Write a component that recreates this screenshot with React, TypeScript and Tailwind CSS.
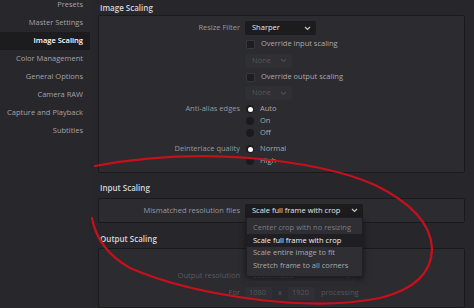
import React from "react";

const nav = [
  "Presets",
  "Master Settings",
  "Image Scaling",
  "Color Management",
  "General Options",
  "Camera RAW",
  "Capture and Playback",
  "Subtitles",
];

const scaleOptions = [
  { label: "Center crop with no resizing", tone: "text-[#7c7c82]" },
  { label: "Scale full frame with crop", tone: "text-[#f2f2f2] bg-[#1f1f23]" },
  { label: "Scale entire image to fit", tone: "text-[#a9a9ae]" },
  { label: "Stretch frame to all corners", tone: "text-[#a9a9ae]" },
];

const Chevron = ({ dim }: { dim?: boolean }) => (
  <svg
    width="7"
    height="5"
    viewBox="0 0 7 5"
    className={dim ? "text-[#4c4c52]" : "text-[#c4c4c8]"}
  >
    <path d="M1 1l2.5 2.5L6 1" fill="none" stroke="currentColor" strokeWidth="1.2" />
  </svg>
);

const Select = ({
  value,
  width,
  dim,
  children,
}: {
  value: string;
  width: string;
  dim?: boolean;
  children?: React.ReactNode;
}) => (
  <div
    className={`relative h-[14px] ${width} rounded-[2px] flex items-center justify-between pl-[7px] pr-[5px] ${
      dim ? "bg-[#2f2f34] text-[#56565c]" : "bg-[#1c1c1f] text-[#e6e6e8]"
    }`}
  >
    <span>{value}</span>
    <Chevron dim={dim} />
    {children}
  </div>
);

const Check = ({ label }: { label: string }) => (
  <div className="flex items-center gap-[6px] text-[#a9a9ae]">
    <span className="w-[9px] h-[9px] ml-[1px] rounded-[1px] bg-[#1e1e21] border border-[#37373c]" />
    <span>{label}</span>
  </div>
);

const Radio = ({ label, on }: { label: string; on?: boolean }) => (
  <div className="h-[12px] flex items-center gap-[6px] text-[#a9a9ae]">
    <span className="w-[8px] h-[8px] ml-[1px] rounded-full bg-[#1b1b1e] flex items-center justify-center">
      {on && <span className="w-[5px] h-[5px] rounded-full bg-white" />}
    </span>
    <span>{label}</span>
  </div>
);

const Row = ({
  label,
  h,
  dim,
  children,
}: {
  label?: string;
  h: string;
  dim?: boolean;
  children: React.ReactNode;
}) => (
  <div className={`flex items-center ${h}`}>
    <div
      className={`w-[141px] shrink-0 text-right ${dim ? "text-[#5a5a60]" : "text-[#98989e]"}`}
    >
      {label}
    </div>
    <div className="ml-[5px] flex items-center">{children}</div>
  </div>
);

const RadioGroup = ({ label, items }: { label: string; items: [string, boolean][] }) => (
  <div className="flex items-start">
    <div className="w-[141px] shrink-0 h-[12px] flex items-center justify-end text-[#98989e]">
      {label}
    </div>
    <div className="ml-[5px] flex flex-col">
      {items.map(([l, on]) => (
        <Radio key={l} label={l} on={on} />
      ))}
    </div>
  </div>
);

const Heading = ({ children, className }: { children: string; className: string }) => (
  <h2 className={`flex items-center pl-[2px] text-[8px] font-semibold text-[#d6d6da] ${className}`}>
    {children}
  </h2>
);

export default function App() {
  return (
    <div className="relative w-[474px] h-[308px] overflow-hidden flex bg-[#28282c] font-['Open_Sans',sans-serif] text-[7.5px] leading-none">
      <aside className="w-[90px] shrink-0 -mt-[4px] flex flex-col bg-[#28282c]">
        {nav.map((n) => (
          <div
            key={n}
            className={`h-[18px] shrink-0 flex items-center justify-end pr-[7px] ${
              n === "Image Scaling"
                ? "bg-[#1c1c1f] text-white font-semibold"
                : "text-[#a2a2a8]"
            }`}
          >
            {n}
          </div>
        ))}
      </aside>

      <main className="flex-1 pl-[8px] pr-[9px] flex flex-col bg-[#27272b]">
        <Heading className="h-[15px] pt-[1px]">Image Scaling</Heading>
        <section className="h-[158px] shrink-0 border border-[#1a1a1d] bg-[#2b2b30] rounded-[2px] pt-[4px] flex flex-col">
          <Row label="Resize Filter" h="h-[16px]">
            <Select value="Sharper" width="w-[71px]" />
          </Row>
          <Row h="h-[16px]">
            <Check label="Override input scaling" />
          </Row>
          <Row h="h-[17px]">
            <Select value="None" width="w-[47px]" dim />
          </Row>
          <Row h="h-[16px]">
            <Check label="Override output scaling" />
          </Row>
          <Row h="h-[16px]">
            <Select value="None" width="w-[47px]" dim />
          </Row>
          <div className="mt-[2px]">
            <RadioGroup
              label="Anti-alias edges"
              items={[
                ["Auto", true],
                ["On", false],
                ["Off", false],
              ]}
            />
          </div>
          <div className="mt-[4px]">
            <RadioGroup
              label="Deinterlace quality"
              items={[
                ["Normal", true],
                ["High", false],
              ]}
            />
          </div>
        </section>

        <Heading className="h-[25px] pt-[5px]">Input Scaling</Heading>
        <section className="relative z-10 h-[25px] shrink-0 border border-[#1a1a1d] bg-[#2b2b30] rounded-[2px] flex items-center">
          <Row label="Mismatched resolution files" h="h-[14px]">
            <Select value="Scale full frame with crop" width="w-[118px]">
              <div className="absolute left-[1px] top-full -mt-[1px] w-[117px] py-[4px] rounded-[2px] bg-[#2e2e33] border border-[#1f1f22] shadow-[0_2px_6px_rgba(0,0,0,0.5)] flex flex-col">
                {scaleOptions.map((o) => (
                  <div key={o.label} className={`h-[12.5px] flex items-center pl-[6px] ${o.tone}`}>
                    {o.label}
                  </div>
                ))}
              </div>
            </Select>
          </Row>
        </section>

        <Heading className="h-[25px] pt-[7px]">Output Scaling</Heading>
        <section className="flex-1 border border-[#1a1a1d] bg-[#2b2b30] rounded-[2px] pt-[20px] flex flex-col gap-[3px]">
          <Row label="Output resolution" h="h-[14px]" dim>
            <Select value="Customized" width="w-[111px]" dim />
          </Row>
          <Row label="For" h="h-[14px]" dim>
            <div className="flex items-center gap-[6px] text-[#56565c]">
              <span className="w-[27px] h-[13px] rounded-[2px] bg-[#2f2f34] flex items-center pl-[4px]">1080</span>
              <span>x</span>
              <span className="w-[27px] h-[13px] rounded-[2px] bg-[#2f2f34] flex items-center pl-[4px]">1920</span>
              <span>processing</span>
            </div>
          </Row>
        </section>
      </main>

      <svg
        className="absolute inset-0 z-20 pointer-events-none"
        width="474"
        height="308"
        viewBox="0 0 474 308"
      >
        <path
          d="M95 166 Q170 152 250 158 Q330 165 375 185 Q430 212 432 248 Q432 285 380 298 Q330 308 260 300 Q180 290 130 268 Q98 250 92 218"
          fill="none"
          stroke="#c8101c"
          strokeWidth="2.2"
          strokeLinecap="round"
        />
      </svg>
    </div>
  );
}
